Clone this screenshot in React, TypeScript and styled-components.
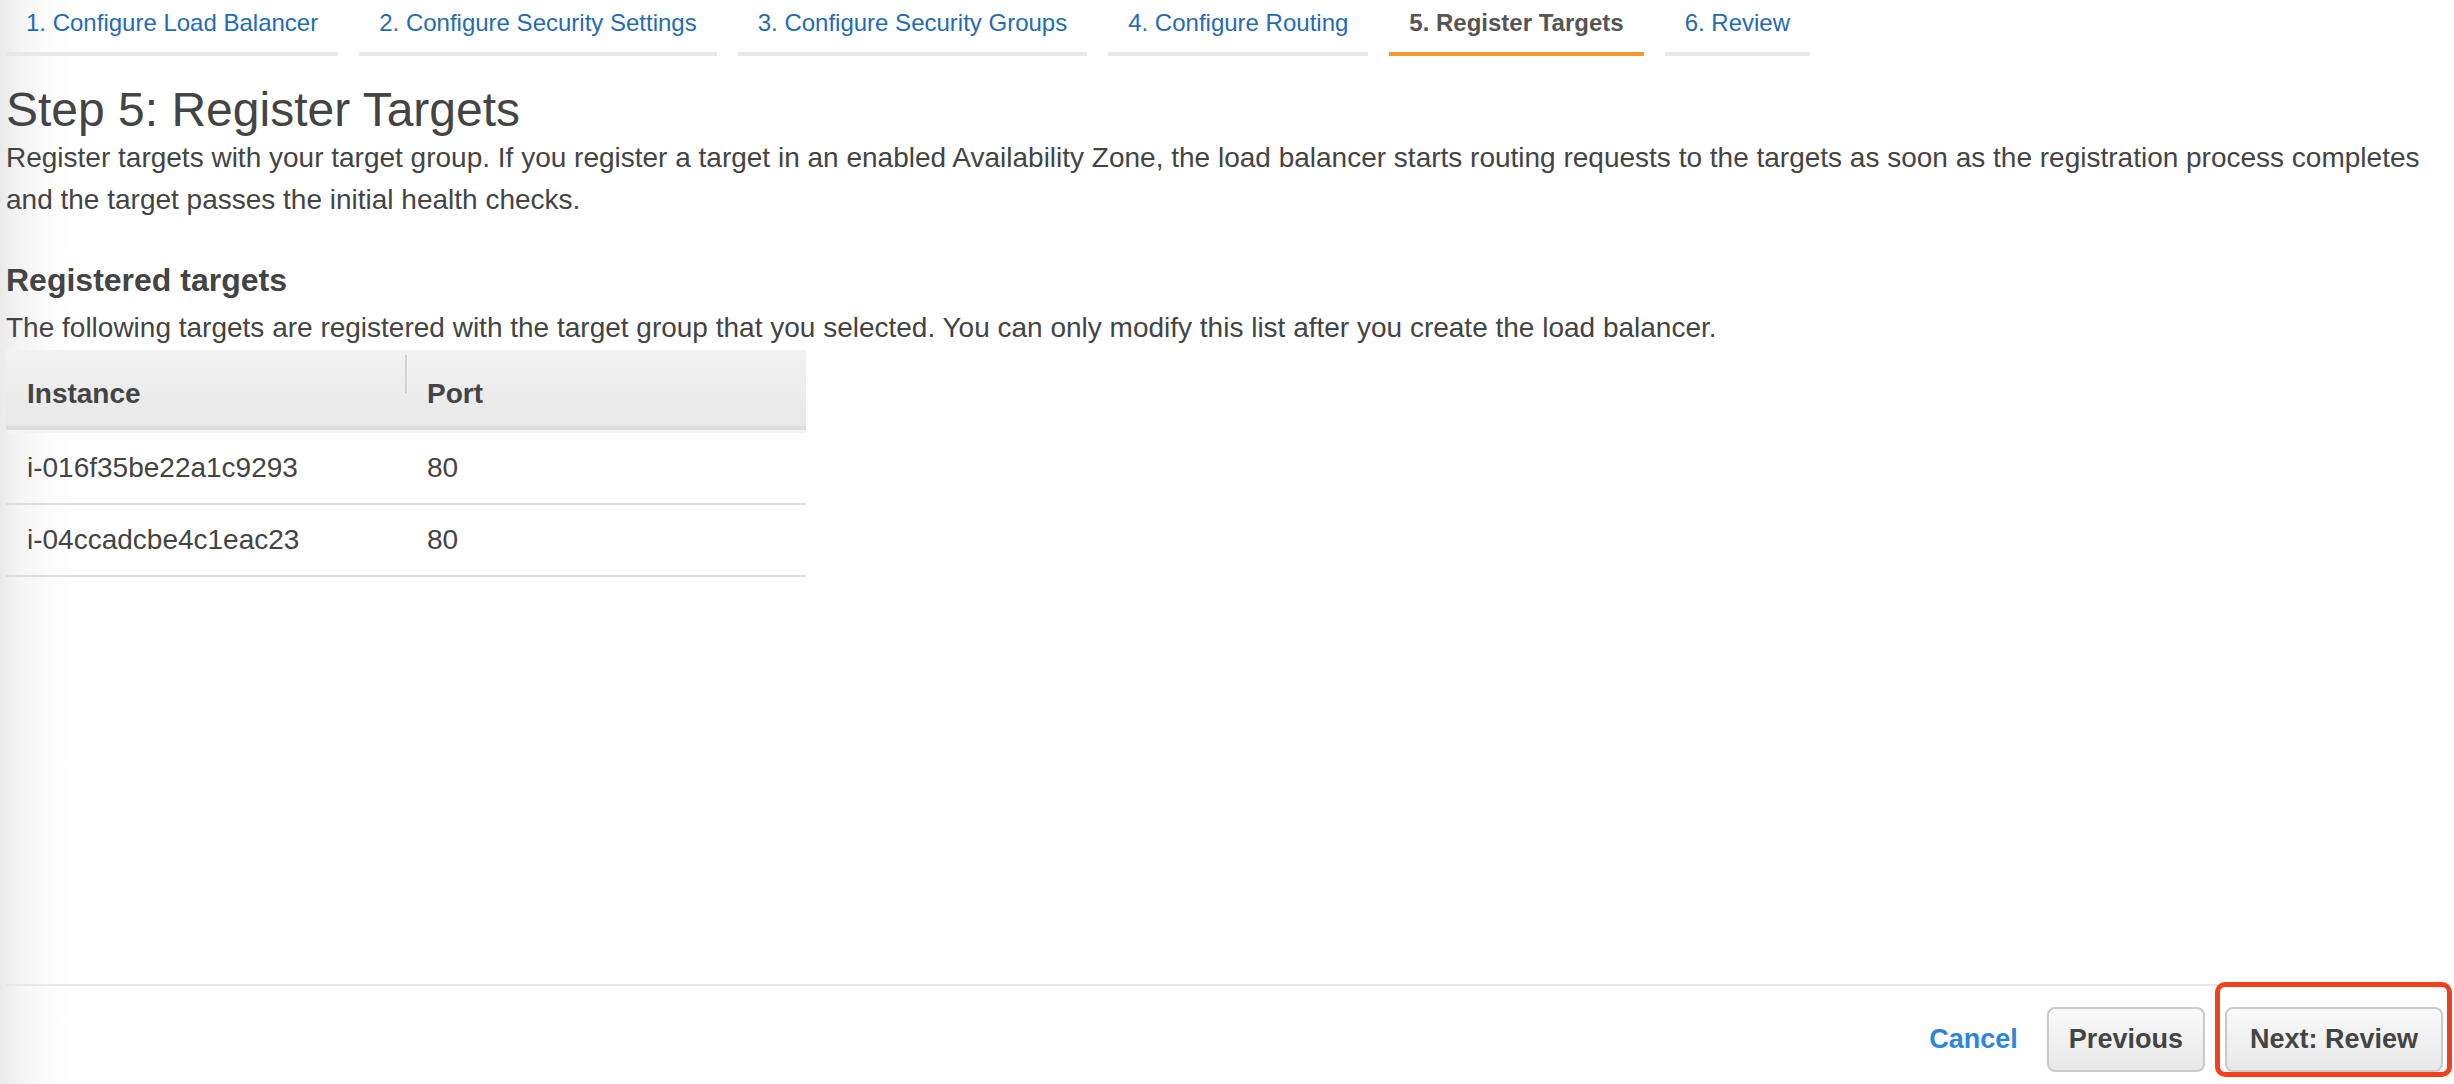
import React from "react";
import styled, { createGlobalStyle } from "styled-components";

const GlobalStyle = createGlobalStyle`
  html, body {
    margin: 0;
    padding: 0;
  }
  body {
    font-family: "Liberation Sans", Arial, Helvetica, sans-serif;
    color: #444;
    background: linear-gradient(to right, #ebebeb 0px, #f4f4f4 20px, #fbfbfb 45px, #ffffff 72px);
  }
  * { box-sizing: border-box; }
`;

const Page = styled.div`
  display: flex;
  flex-direction: column;
  min-height: 100vh;
  padding: 0 11px 0 6px;
`;

const Main = styled.main`
  display: flex;
  flex-direction: column;
  align-items: flex-start;
`;

const TabBar = styled.nav`
  display: flex;
  gap: 21px;
`;

const Tab = styled.div<{ $active?: boolean }>`
  padding: 8px 20px 14px;
  font-size: 24px;
  line-height: 30px;
  white-space: nowrap;
  color: ${(p) => (p.$active ? "#555" : "#236cb3")};
  font-weight: ${(p) => (p.$active ? 700 : 400)};
  border-bottom: 4px solid ${(p) => (p.$active ? "#f7992d" : "#e8e8e8")};
  cursor: pointer;
`;

const Title = styled.h1`
  margin: 27px 0 0;
  font-size: 48px;
  line-height: 54px;
  font-weight: 400;
  color: #444;
`;

const Intro = styled.p`
  margin: 0;
  font-size: 28px;
  line-height: 42px;
  color: #444;
`;

const SectionTitle = styled.h2`
  margin: 39px 0 0;
  font-size: 32px;
  line-height: 40px;
  font-weight: 700;
  color: #444;
`;

const SectionText = styled.p`
  margin: 7px 0 0;
  font-size: 28px;
  line-height: 42px;
  color: #444;
`;

const Table = styled.div`
  margin-top: 1px;
  width: 800px;
  display: flex;
  flex-direction: column;
`;

const HeaderRow = styled.div`
  display: grid;
  grid-template-columns: 400px 1fr;
  height: 83px;
  padding-top: 4px;
  align-items: center;
  background: linear-gradient(
    to bottom,
    #f2f2f2 0px,
    #e8e8e8 76px,
    #dcdcdc 76px,
    #dcdcdc 80px,
    #f3f3f3 80px,
    #f3f3f3 83px
  );
`;

const HeadCell = styled.div<{ $divider?: boolean }>`
  position: relative;
  padding-left: 21px;
  font-size: 28px;
  line-height: 34px;
  font-weight: 700;
  color: #444;
  ${(p) =>
    p.$divider &&
    `
    &::before {
      content: "";
      position: absolute;
      left: -1px;
      top: -22px;
      height: 38px;
      width: 2px;
      background: #d2d2d2;
      box-shadow: 1px 0 0 #f6f6f6;
    }
  `}
`;

const BodyRow = styled.div`
  display: grid;
  grid-template-columns: 400px 1fr;
  height: 72px;
  align-items: center;
  border-bottom: 2px solid #dedede;
`;

const Cell = styled.div`
  padding-left: 21px;
  font-size: 28px;
  line-height: 34px;
  color: #444;
`;

const Footer = styled.footer`
  margin-top: auto;
  display: flex;
  justify-content: flex-end;
  align-items: center;
  gap: 20px;
  padding: 21px 0 12px;
  border-top: 2px solid #e8e8e8;
`;

const CancelLink = styled.a`
  margin-right: 9px;
  font-size: 27px;
  font-weight: 700;
  color: #2f86d8;
  text-decoration: none;
  cursor: pointer;
`;

const Button = styled.button<{ $wide?: boolean }>`
  height: 65px;
  padding: 0 ${(p) => (p.$wide ? 23 : 20)}px;
  font-family: "Liberation Sans", Arial, Helvetica, sans-serif;
  font-size: 27px;
  font-weight: 700;
  color: #444;
  background: linear-gradient(to bottom, #fafafa 0%, #e8e8e8 100%);
  border: 2px solid #c9c9c9;
  border-radius: 8px;
  cursor: pointer;
`;

const Highlight = styled.div`
  position: relative;
  display: flex;
  &::after {
    content: "";
    position: absolute;
    top: -25px;
    left: -10px;
    right: -9px;
    bottom: -5px;
    border: 5px solid #f2401f;
    border-radius: 10px;
    pointer-events: none;
  }
`;

const tabs = [
  "1. Configure Load Balancer",
  "2. Configure Security Settings",
  "3. Configure Security Groups",
  "4. Configure Routing",
  "5. Register Targets",
  "6. Review",
];

const targets = [
  { id: "i-016f35be22a1c9293", port: 80 },
  { id: "i-04ccadcbe4c1eac23", port: 80 },
];

export default function App() {
  return (
    <>
      <GlobalStyle />
      <Page>
        <Main>
          <TabBar>
            {tabs.map((t, i) => (
              <Tab key={t} $active={i === 4}>
                {t}
              </Tab>
            ))}
          </TabBar>
          <Title>Step 5: Register Targets</Title>
          <Intro>
            Register targets with your target group. If you register a target in an enabled
            Availability Zone, the load balancer starts routing requests to the targets as soon as
            the registration process completes and the target passes the initial health checks.
          </Intro>
          <SectionTitle>Registered targets</SectionTitle>
          <SectionText>
            The following targets are registered with the target group that you selected. You can
            only modify this list after you create the load balancer.
          </SectionText>
          <Table>
            <HeaderRow>
              <HeadCell>Instance</HeadCell>
              <HeadCell $divider>Port</HeadCell>
            </HeaderRow>
            {targets.map((t) => (
              <BodyRow key={t.id}>
                <Cell>{t.id}</Cell>
                <Cell>{t.port}</Cell>
              </BodyRow>
            ))}
          </Table>
        </Main>
        <Footer>
          <CancelLink>Cancel</CancelLink>
          <Button>Previous</Button>
          <Highlight>
            <Button $wide>Next: Review</Button>
          </Highlight>
        </Footer>
      </Page>
    </>
  );
}
